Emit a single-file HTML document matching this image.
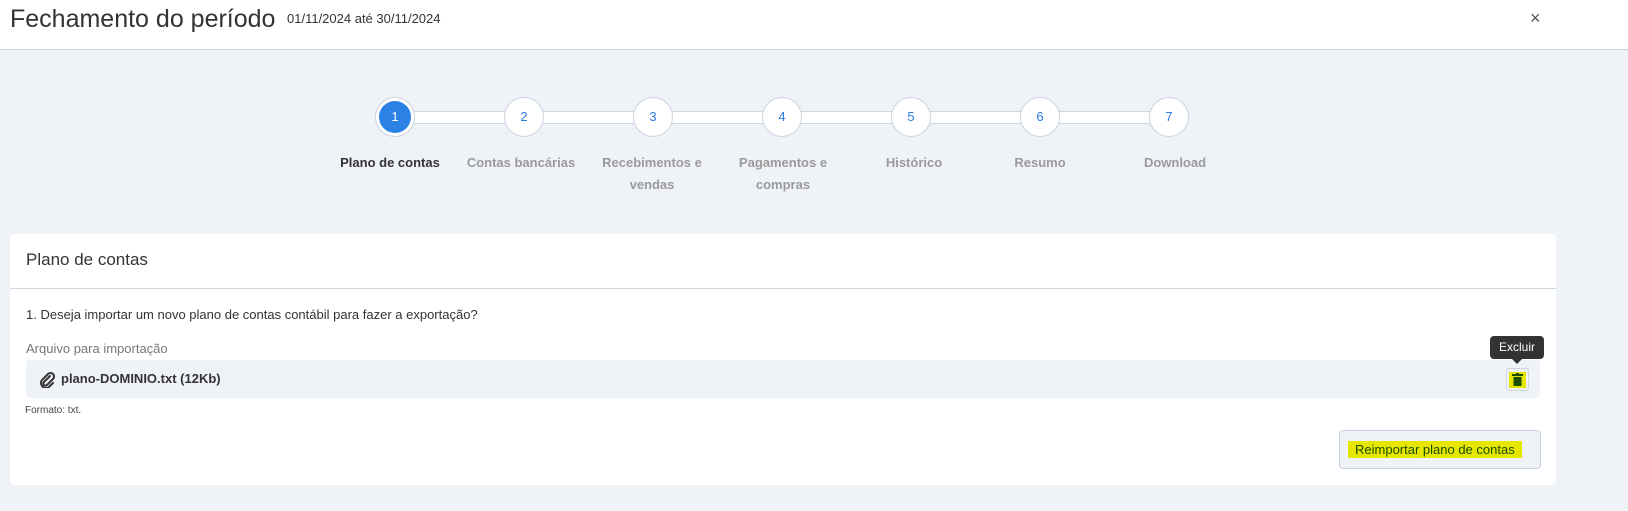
<!DOCTYPE html>
<html><head><meta charset="utf-8"><style>
*{box-sizing:border-box;margin:0;padding:0}
body{width:1628px;height:511px;background:#eff2f7;font-family:"Liberation Sans",sans-serif;position:relative;overflow:hidden;color:#333}
.top{position:absolute;left:0;top:0;width:1628px;height:50px;background:#fff;border-bottom:1px solid #c9d3e0}
.abs{position:absolute;white-space:nowrap}
.bar{position:absolute;left:395px;top:111px;width:774px;height:13px;background:#fff;border:1px solid #cdd5e0}
.c{position:absolute;width:40px;height:40px;border-radius:50%;background:#fff;border:1px solid #cdd5e0;top:97px;font-size:13px;color:#2a7be4;text-align:center;line-height:38px}
.c.a::after{content:"";position:absolute;left:3px;top:3px;width:32px;height:32px;border-radius:50%;background:#2b82e4}
.c.a span{position:relative;z-index:1;color:#fff}
.l{position:absolute;width:130px;text-align:center;font-size:13px;font-weight:bold;color:#9a9a9a;line-height:22px;top:152px}
.card{position:absolute;left:10px;top:234px;width:1546px;height:251px;background:#fff;border-radius:4px}
</style></head><body>
<div class="top">
<div class="abs" style="left:10px;top:5px;font-size:25px;color:#333">Fechamento do período</div>
<div class="abs" style="left:287px;top:11px;font-size:13px;color:#333">01/11/2024 até 30/11/2024</div>
<div class="abs" style="left:1530px;top:8px;font-size:18px;color:#555">×</div>
</div>
<div class="bar"></div>
<div class="c a" style="left:375px"><span>1</span></div>
<div class="c" style="left:504px">2</div>
<div class="c" style="left:633px">3</div>
<div class="c" style="left:762px">4</div>
<div class="c" style="left:891px">5</div>
<div class="c" style="left:1020px">6</div>
<div class="c" style="left:1149px">7</div>
<div class="l" style="left:325px;color:#333">Plano de contas</div>
<div class="l" style="left:456px">Contas bancárias</div>
<div class="l" style="left:587px">Recebimentos e<br>vendas</div>
<div class="l" style="left:718px">Pagamentos e<br>compras</div>
<div class="l" style="left:849px">Histórico</div>
<div class="l" style="left:975px">Resumo</div>
<div class="l" style="left:1110px">Download</div>
<div class="card">
<div class="abs" style="left:16px;top:16px;font-size:17px;color:#333">Plano de contas</div>
<div style="position:absolute;left:0;top:54px;width:100%;height:1px;background:#cdd5e0"></div>
<div class="abs" style="left:16px;top:73px;font-size:13px;color:#333">1. Deseja importar um novo plano de contas contábil para fazer a exportação?</div>
<div class="abs" style="left:16px;top:107px;font-size:13px;color:#777">Arquivo para importação</div>
<div style="position:absolute;left:16px;top:126px;width:1514px;height:38px;background:#eff2f7;border-radius:4px">
<svg style="position:absolute;left:13px;top:11px" width="16" height="17" viewBox="0 0 16 17"><path d="M11 5 L5 11 a2 2 0 0 0 3 3 L14 8 a3.5 3.5 0 0 0 -5 -5 L3 9 a5 5 0 0 0 7 7 L14 12" fill="none" stroke="#333" stroke-width="2" stroke-linecap="round"/></svg>
<div class="abs" style="left:35px;top:11px;font-size:13px;font-weight:bold;color:#333">plano-DOMINIO.txt (12Kb)</div>
<div style="position:absolute;left:1480px;top:8px;width:23px;height:23px;border:1px solid #cdd5e0;border-radius:3px;background:#eff2f7">
<div style="position:absolute;left:2px;top:3px;width:17px;height:16px;background:#e6e600"></div>
<svg style="position:absolute;left:5px;top:4px" width="11" height="14" viewBox="0 0 11 14"><rect x="0" y="1" width="11" height="2" fill="#1a4d00"/><rect x="4" y="0" width="3" height="2" fill="#1a4d00"/><rect x="1.5" y="4" width="8" height="9" fill="#1a4d00"/></svg>
</div>
</div>
<div style="position:absolute;left:1480px;top:102px;width:54px;height:23px;background:#333;border-radius:4px;color:#fff;font-size:12px;text-align:center;line-height:23px">Excluir</div>
<div style="position:absolute;left:1502px;top:125px;width:0;height:0;border-left:5px solid transparent;border-right:5px solid transparent;border-top:5px solid #333"></div>
<div class="abs" style="left:15px;top:171px;font-size:10px;color:#444">Formato: txt.</div>
<div style="position:absolute;left:1329px;top:196px;width:202px;height:39px;border:1px solid #c9d3e0;border-radius:4px;background:#eff2f7">
<div class="abs" style="left:8px;top:10px;height:17px;background:#e6e600;padding:0 7px;font-size:13px;line-height:17px;color:#1a4d00">Reimportar plano de contas</div>
</div>
</div>
</body></html>
